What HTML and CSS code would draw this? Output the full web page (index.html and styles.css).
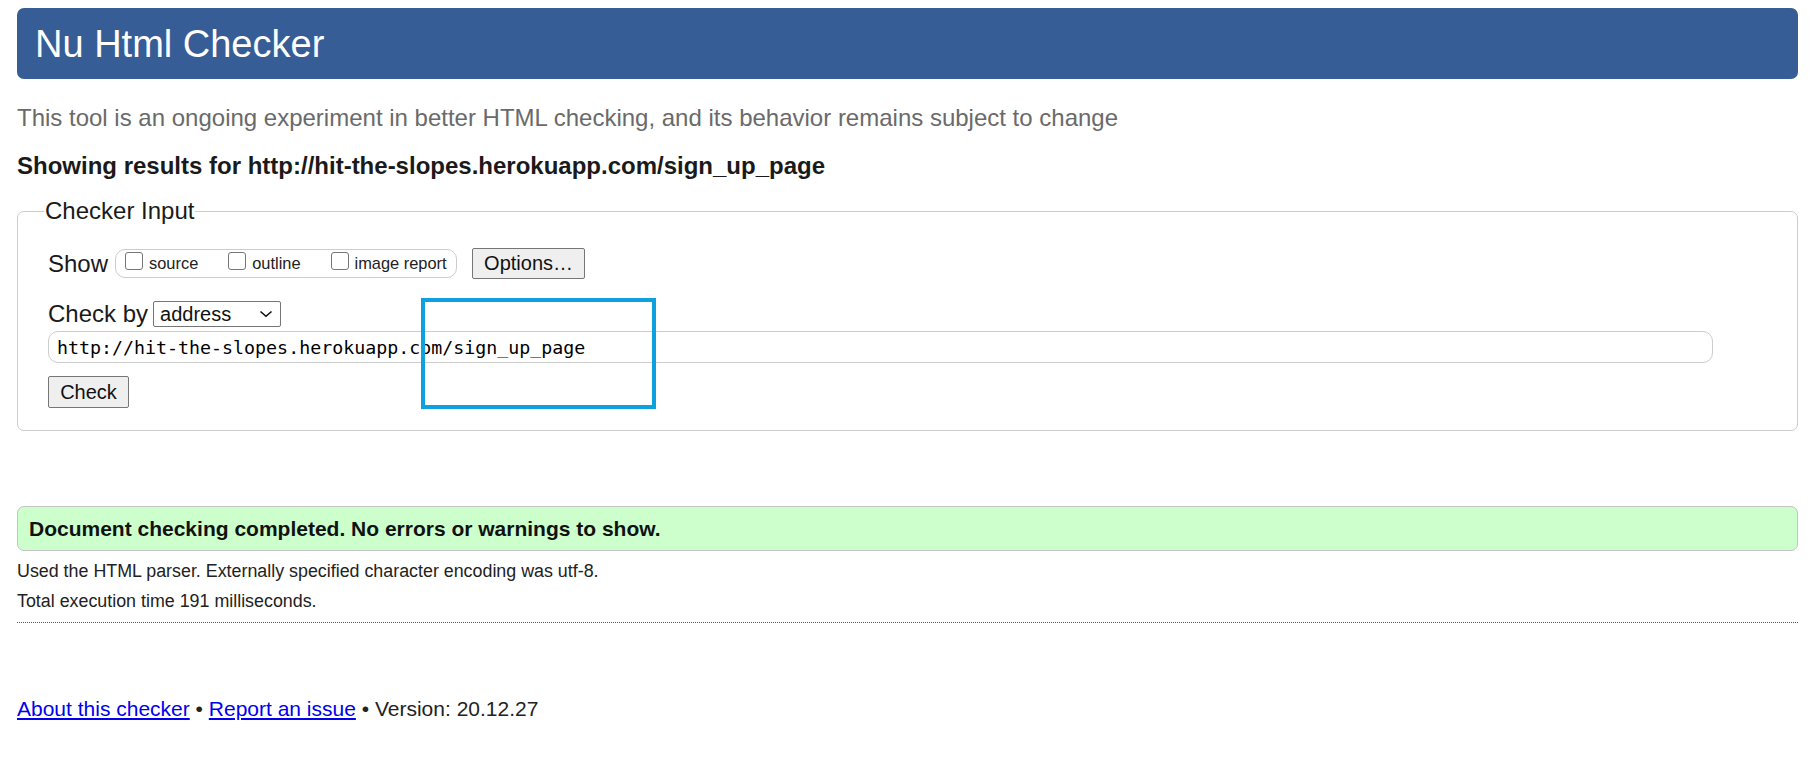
FILE: index.html
```html
<!DOCTYPE html>
<html lang="en">
<head>
<meta charset="utf-8">
<title>Nu Html Checker</title>
<link rel="stylesheet" href="styles.css">
</head>
<body>
<div class="page">
  <header class="banner"><h1 class="banner-title">Nu Html Checker</h1></header>
  <p class="lede">This tool is an ongoing experiment in better HTML checking, and its behavior remains subject to change</p>
  <p class="showing">Showing results for http://hit-the-slopes.herokuapp.com/sign_up_page</p>

  <fieldset class="checker">
    <legend class="checker-legend">Checker Input</legend>
    <div class="row row-show">
      <span class="row-label">Show</span>
      <span class="opts">
        <label class="opt"><span class="box"></span>source</label>
        <label class="opt"><span class="box"></span>outline</label>
        <label class="opt"><span class="box"></span>image report</label>
      </span>
      <span class="btn btn-options">Options…</span>
    </div>
    <div class="row row-by">
      <span class="row-label">Check by</span>
      <span class="select">address
        <svg class="chev" width="14" height="8" viewBox="0 0 14 8"><path d="M1.5 1.5 L7 6.3 L12.5 1.5" fill="none" stroke="#111" stroke-width="1.6"/></svg>
      </span>
    </div>
    <div class="url">http://hit-the-slopes.herokuapp.com/sign_up_page</div>
    <span class="btn btn-check">Check</span>
  </fieldset>

  <div class="success">Document checking completed. No errors or warnings to show.</div>
  <p class="details first">Used the HTML parser. Externally specified character encoding was utf-8.</p>
  <p class="details">Total execution time 191 milliseconds.</p>
  <hr class="rule">

  <p class="footer"><a href="#" class="link">About this checker</a> • <a href="#" class="link">Report an issue</a> • Version: 20.12.27</p>

  <div class="annotation"></div>
</div>
</body>
</html>
```
FILE: styles.css
```css
html, body {
  margin: 0;
  padding: 0;
  background: #ffffff;
}
body {
  font-family: "Liberation Sans", Arial, sans-serif;
  color: #222222;
}
.page {
  position: relative;
  padding: 8px 19px 0 17px;
}
.banner {
  height: 71px;
  background: #365d95;
  border-radius: 7px;
  display: flex;
  align-items: center;
  padding-left: 18px;
}
.banner-title {
  margin: 0;
  font-size: 38px;
  font-weight: normal;
  line-height: 1;
  color: #ffffff;
}
.lede {
  margin: 25px 0 0;
  font-size: 24px;
  line-height: 28px;
  color: #6a6a6a;
}
.showing {
  margin: 20px 0 0;
  font-size: 24px;
  line-height: 28px;
  font-weight: bold;
  color: #1a1a1a;
}
.checker {
  margin: 17px 0 0;
  padding: 23px 30px 22px 30px;
  border: 1px solid #cccccc;
  border-radius: 7px;
  min-width: 0;
}
.checker-legend {
  margin-left: -4px;
  padding: 0 1px;
  font-size: 24px;
  line-height: 28px;
  color: #1a1a1a;
}
.row {
  display: flex;
  align-items: center;
}
.row-show {
  height: 31px;
}
.row-label {
  font-size: 24px;
  line-height: 28px;
  color: #1a1a1a;
}
.opts {
  margin-left: 7px;
  height: 27px;
  width: 331px;
  box-sizing: content-box;
  border: 1px solid #cccccc;
  border-radius: 10px;
  display: flex;
  align-items: center;
  padding: 0 0 0 9px;
  gap: 30px;
}
.opt {
  display: flex;
  align-items: center;
  font-size: 16.4px;
  color: #222222;
}
.box {
  width: 16px;
  height: 16px;
  border: 1px solid #767676;
  border-radius: 3px;
  background: #ffffff;
  margin-right: 6px;
  margin-bottom: 5px;
}
.btn {
  display: inline-flex;
  align-items: center;
  justify-content: center;
  box-sizing: border-box;
  background: #efefef;
  border: 1px solid #767676;
  border-radius: 2px;
  font-size: 20px;
  color: #111111;
}
.btn-options {
  margin-left: 15px;
  width: 113px;
  height: 31px;
}
.row-by {
  margin-top: 21px;
  height: 28px;
}
.select {
  margin-left: 5px;
  box-sizing: border-box;
  width: 128px;
  height: 26px;
  border: 1px solid #767676;
  border-radius: 2px;
  display: flex;
  align-items: center;
  justify-content: space-between;
  padding: 0 7px 0 6px;
  font-size: 20px;
  color: #111111;
}
.chev {
  display: block;
}
.url {
  margin: 3px 54px 0 0;
  box-sizing: border-box;
  height: 32px;
  border: 1px solid #cccccc;
  border-radius: 10px;
  padding-left: 8px;
  display: flex;
  align-items: center;
  font-family: "DejaVu Sans Mono", "Liberation Mono", monospace;
  font-size: 18.3px;
  color: #000000;
}
.btn-check {
  margin-top: 13px;
  width: 81px;
  height: 32px;
}
.success {
  margin-top: 75px;
  box-sizing: border-box;
  height: 45px;
  background: #ccffcc;
  border: 1px solid #c4c4c4;
  border-radius: 7px;
  display: flex;
  align-items: center;
  padding-left: 11px;
  font-size: 21px;
  font-weight: bold;
  color: #111111;
}
.details {
  margin: 0;
  font-size: 17.85px;
  line-height: 30px;
  color: #222222;
}
.details.first {
  margin-top: 5px;
}
.rule {
  margin: 6px 0 0;
  border: 0;
  border-top: 1px dotted #555555;
  height: 0;
}
.footer {
  margin: 74px 0 0;
  font-size: 21px;
  line-height: 24px;
  color: #222222;
}
.link {
  color: #0000ee;
  text-decoration: underline;
}
.annotation {
  position: absolute;
  left: 421px;
  top: 298px;
  width: 235px;
  height: 111px;
  box-sizing: border-box;
  border: 4px solid #0fa1de;
}
```
